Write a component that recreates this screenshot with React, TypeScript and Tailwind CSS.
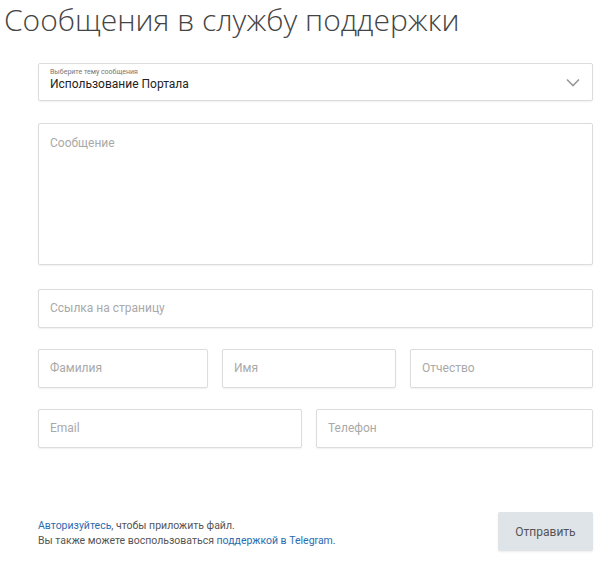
import React from "react";

const field =
  "h-full w-full rounded-[2px] border border-[#dcdcdc] bg-white px-[11px] pb-[1px] text-[12px] text-[#222] shadow-[0_1px_2px_rgba(0,0,0,0.06)] outline-none placeholder:text-[#a9a9a9]";

const Input = ({ placeholder }: { placeholder: string }) => (
  <div className="h-[39px]">
    <input type="text" placeholder={placeholder} className={field} />
  </div>
);

export default function App() {
  return (
    <div
      className="h-[561px] w-[600px] overflow-hidden bg-white"
      style={{ fontFamily: "Roboto, 'Liberation Sans', Arial, sans-serif" }}
    >
      <h1
        className="pl-[4px] text-[30px] font-light leading-[40px] text-[#444]"
        style={{ fontFamily: "'Open Sans', 'Noto Sans', sans-serif" }}
      >
        Сообщения в службу поддержки
      </h1>

      <div className="ml-[38px] mr-[7px] mt-[23px]">
        {/* select */}
        <div className="relative flex h-[38px] items-center justify-between rounded-[2px] border border-[#dcdcdc] bg-white pl-[11px] pr-[12px] shadow-[0_1px_2px_rgba(0,0,0,0.06)]">
          <div className="mb-[4px] flex flex-col">
            <span className="text-[7px] leading-[8px] text-[#777]">Выберите тему сообщения</span>
            <span className="mt-[1px] text-[12px] leading-[15px] text-[#222]">Использование Портала</span>
          </div>
          <svg width="14" height="9" viewBox="0 0 14 9" fill="none" className="mt-[1px]">
            <path d="M1 1.5L7 7.5L13 1.5" stroke="#999" strokeWidth="1.6" />
          </svg>
        </div>

        {/* textarea */}
        <div className="mt-[22px] h-[142px]">
          <textarea
            placeholder="Сообщение"
            className="h-full w-full resize-none rounded-[2px] border border-[#dcdcdc] bg-white px-[11px] pt-[10px] text-[12px] text-[#222] shadow-[0_1px_2px_rgba(0,0,0,0.06)] outline-none placeholder:text-[#a9a9a9]"
          />
        </div>

        <div className="mt-[24px]">
          <Input placeholder="Ссылка на страницу" />
        </div>

        <div className="mt-[21px] grid grid-cols-[170px_174px_1fr] gap-[14px]">
          <Input placeholder="Фамилия" />
          <Input placeholder="Имя" />
          <Input placeholder="Отчество" />
        </div>

        <div className="mt-[21px] grid grid-cols-[264px_1fr] gap-[14px]">
          <Input placeholder="Email" />
          <Input placeholder="Телефон" />
        </div>

        <div className="mt-[64px] flex items-center justify-between">
          <div className="pt-[2px] text-[10.5px] leading-[15px] text-[#555]">
            <div>
              <a className="text-[#2b6cb0]">Авторизуйтесь</a>, чтобы приложить файл.
            </div>
            <div>
              Вы также можете воспользоваться{" "}
              <a className="text-[#2b6cb0]">поддержкой в Telegram</a>.
            </div>
          </div>
          <button className="h-[39px] w-[95px] rounded-[2px] bg-[#dfe4e8] text-[12px] text-[#555] shadow-[0_1px_2px_rgba(0,0,0,0.08)]">
            Отправить
          </button>
        </div>
      </div>
    </div>
  );
}
